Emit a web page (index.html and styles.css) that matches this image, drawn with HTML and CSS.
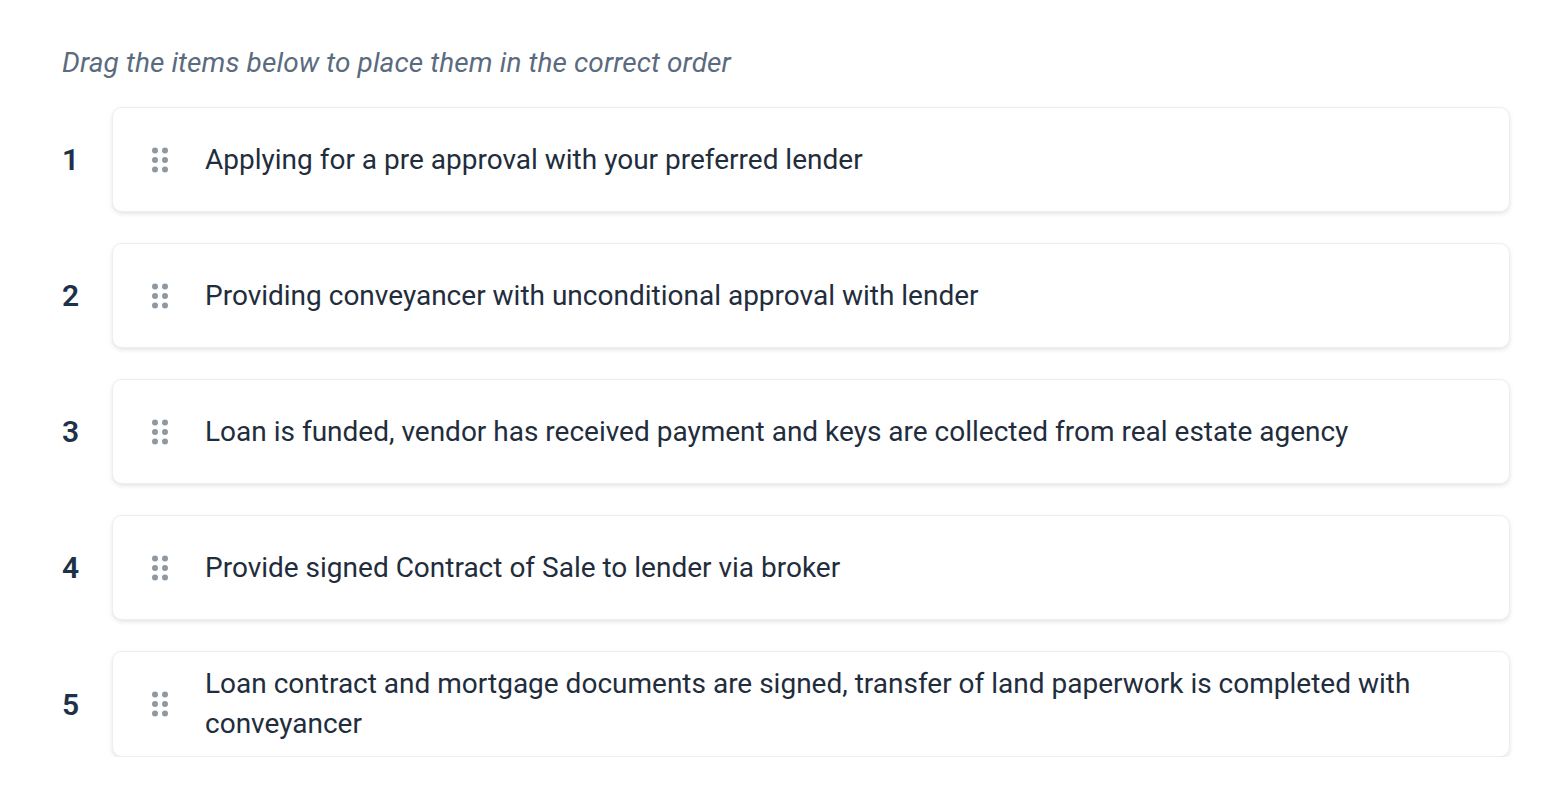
FILE: index.html
```html
<!DOCTYPE html>
<html>
<head>
<meta charset="utf-8">
<link rel="stylesheet" href="styles.css">
</head>
<body>
<div class="page">
  <p class="hint">Drag the items below to place them in the correct order</p>
  <ol class="list">
    <li class="row">
      <span class="num">1</span>
      <div class="card">
        <span class="handle"><svg width="18" height="26" viewBox="0 0 18 26"><g fill="#8e98a3"><circle cx="4" cy="3.5" r="3"/><circle cx="14" cy="3.5" r="3"/><circle cx="4" cy="13" r="3"/><circle cx="14" cy="13" r="3"/><circle cx="4" cy="22.5" r="3"/><circle cx="14" cy="22.5" r="3"/></g></svg></span>
        <span class="text">Applying for a pre approval with your preferred lender</span>
      </div>
    </li>
    <li class="row">
      <span class="num">2</span>
      <div class="card">
        <span class="handle"><svg width="18" height="26" viewBox="0 0 18 26"><g fill="#8e98a3"><circle cx="4" cy="3.5" r="3"/><circle cx="14" cy="3.5" r="3"/><circle cx="4" cy="13" r="3"/><circle cx="14" cy="13" r="3"/><circle cx="4" cy="22.5" r="3"/><circle cx="14" cy="22.5" r="3"/></g></svg></span>
        <span class="text">Providing conveyancer with unconditional approval with lender</span>
      </div>
    </li>
    <li class="row">
      <span class="num">3</span>
      <div class="card">
        <span class="handle"><svg width="18" height="26" viewBox="0 0 18 26"><g fill="#8e98a3"><circle cx="4" cy="3.5" r="3"/><circle cx="14" cy="3.5" r="3"/><circle cx="4" cy="13" r="3"/><circle cx="14" cy="13" r="3"/><circle cx="4" cy="22.5" r="3"/><circle cx="14" cy="22.5" r="3"/></g></svg></span>
        <span class="text">Loan is funded, vendor has received payment and keys are collected from real estate agency</span>
      </div>
    </li>
    <li class="row">
      <span class="num">4</span>
      <div class="card">
        <span class="handle"><svg width="18" height="26" viewBox="0 0 18 26"><g fill="#8e98a3"><circle cx="4" cy="3.5" r="3"/><circle cx="14" cy="3.5" r="3"/><circle cx="4" cy="13" r="3"/><circle cx="14" cy="13" r="3"/><circle cx="4" cy="22.5" r="3"/><circle cx="14" cy="22.5" r="3"/></g></svg></span>
        <span class="text">Provide signed Contract of Sale to lender via broker</span>
      </div>
    </li>
    <li class="row">
      <span class="num">5</span>
      <div class="card">
        <span class="handle"><svg width="18" height="26" viewBox="0 0 18 26"><g fill="#8e98a3"><circle cx="4" cy="3.5" r="3"/><circle cx="14" cy="3.5" r="3"/><circle cx="4" cy="13" r="3"/><circle cx="14" cy="13" r="3"/><circle cx="4" cy="22.5" r="3"/><circle cx="14" cy="22.5" r="3"/></g></svg></span>
        <span class="text">Loan contract and mortgage documents are signed, transfer of land paperwork is completed with conveyancer</span>
      </div>
    </li>
  </ol>
</div>
</body>
</html>
```
FILE: styles.css
```css
html, body {
  margin: 0;
  padding: 0;
  background: #ffffff;
}
body {
  font-family: Roboto, "Liberation Sans", sans-serif;
  color: #1f2d3d;
}
.page {
  padding: 44px 36px 0 62px;
}
.hint {
  margin: 0 0 25px 0;
  font-size: 28px;
  line-height: 38px;
  font-style: italic;
  letter-spacing: 0.1px;
  color: #5b6b7f;
}
.list {
  list-style: none;
  margin: 0;
  padding: 0;
  display: flex;
  flex-direction: column;
  gap: 31px;
}
.row {
  display: flex;
  align-items: center;
}
.num {
  width: 50px;
  flex: none;
  font-size: 30px;
  font-weight: 600;
  color: #1e3148;
}
.card {
  flex: 1;
  display: flex;
  align-items: center;
  min-height: 105px;
  box-sizing: border-box;
  padding: 12px 40px 12px 38px;
  background: #fff;
  border: 1px solid #eceef1;
  border-radius: 10px;
  box-shadow: 0 2px 4px rgba(30, 45, 61, 0.12);
}
.handle {
  width: 18px;
  height: 26px;
  flex: none;
  margin-right: 36px;
  display: flex;
}
.text {
  font-size: 28px;
  line-height: 40px;
  color: #1f2d3d;
}
```
